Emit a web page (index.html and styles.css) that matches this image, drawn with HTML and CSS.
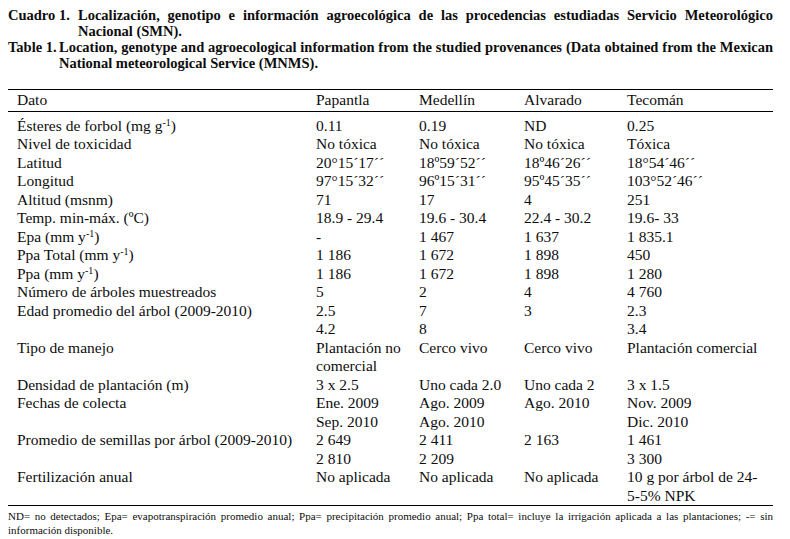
FILE: index.html
```html
<!DOCTYPE html>
<html>
<head>
<meta charset="utf-8">
<title>Cuadro 1</title>
<link rel="stylesheet" href="styles.css">
</head>
<body>
<div class="page">
  <div class="caption">
    <div class="cap-row">
      <span class="cap-label cap-label-es">Cuadro 1.</span>
      <span class="cap-text">Localización, genotipo e información agroecológica de las procedencias estudiadas Servicio Meteorológico Nacional (SMN).</span>
    </div>
    <div class="cap-row cap-row-en">
      <span class="cap-label cap-label-en">Table 1.</span>
      <span class="cap-text"><span class="tight">Location, genotype and agroecological information from the studied provenances (Data obtained from the Mexican</span> National meteorological Service (MNMS).</span>
    </div>
  </div>

  <table class="data">
    <colgroup>
      <col class="c1"><col class="c2"><col class="c3"><col class="c4"><col class="c5">
    </colgroup>
    <thead>
      <tr><th>Dato</th><th>Papantla</th><th>Medellín</th><th>Alvarado</th><th>Tecomán</th></tr>
    </thead>
    <tbody>
      <tr class="first"><td>Ésteres de forbol (mg g<sup>-1</sup>)</td><td>0.11</td><td>0.19</td><td>ND</td><td>0.25</td></tr>
      <tr><td>Nivel de toxicidad</td><td>No tóxica</td><td>No tóxica</td><td>No tóxica</td><td>Tóxica</td></tr>
      <tr><td>Latitud</td><td>20°15´17´´</td><td>18º59´52´´</td><td>18º46´26´´</td><td>18°54´46´´</td></tr>
      <tr><td>Longitud</td><td>97°15´32´´</td><td>96º15´31´´</td><td>95º45´35´´</td><td>103°52´46´´</td></tr>
      <tr><td>Altitud (msnm)</td><td>71</td><td>17</td><td>4</td><td>251</td></tr>
      <tr><td>Temp. min-máx. (ºC)</td><td>18.9 - 29.4</td><td>19.6 - 30.4</td><td>22.4 - 30.2</td><td>19.6- 33</td></tr>
      <tr class="sup-row"><td>Epa (mm y<sup>-1</sup>)</td><td>-</td><td>1 467</td><td>1 637</td><td>1 835.1</td></tr>
      <tr class="sup-row"><td>Ppa Total (mm y<sup>-1</sup>)</td><td>1 186</td><td>1 672</td><td>1 898</td><td>450</td></tr>
      <tr class="sup-row"><td>Ppa (mm y<sup>-1</sup>)</td><td>1 186</td><td>1 672</td><td>1 898</td><td>1 280</td></tr>
      <tr><td>Número de árboles muestreados</td><td>5</td><td>2</td><td>4</td><td>4 760</td></tr>
      <tr><td>Edad promedio del árbol (2009-2010)</td><td>2.5<br>4.2</td><td>7<br>8</td><td>3</td><td>2.3<br>3.4</td></tr>
      <tr><td>Tipo de manejo</td><td>Plantación no<br>comercial</td><td>Cerco vivo</td><td>Cerco vivo</td><td>Plantación comercial</td></tr>
      <tr><td>Densidad de plantación (m)</td><td>3 x 2.5</td><td>Uno cada 2.0</td><td>Uno cada 2</td><td>3 x 1.5</td></tr>
      <tr><td>Fechas de colecta</td><td>Ene. 2009<br>Sep. 2010</td><td>Ago. 2009<br>Ago. 2010</td><td>Ago. 2010</td><td>Nov. 2009<br>Dic. 2010</td></tr>
      <tr><td>Promedio de semillas por árbol (2009-2010)</td><td>2 649<br>2 810</td><td>2 411<br>2 209</td><td>2 163</td><td>1 461<br>3 300</td></tr>
      <tr class="last"><td>Fertilización anual</td><td>No aplicada</td><td>No aplicada</td><td>No aplicada</td><td>10 g por árbol de 24-<br>5-5% NPK</td></tr>
    </tbody>
  </table>

  <p class="note"><span class="note-l1">ND= no detectados; Epa= evapotranspiración promedio anual; Ppa= precipitación promedio anual; Ppa total= incluye la irrigación aplicada a las plantaciones; -= sin</span> <span class="note-l2">información disponible.</span></p>
</div>
</body>
</html>
```

FILE: styles.css
```css
html, body {
  margin: 0;
  padding: 0;
  background: #ffffff;
}

body {
  font-family: "Liberation Serif", serif;
  color: #0d0d0d;
}

.page {
  width: 765px;
  padding: 7px 0 0 8px;
}

.caption {
  font-weight: bold;
  font-size: 14.5px;
  line-height: 16px;
}

.cap-row {
  display: flex;
}

.cap-label {
  flex: none;
  white-space: nowrap;
}

.cap-label-es {
  width: 70px;
}

.cap-label-en {
  width: 51px;
}

.cap-text {
  flex: 1;
  min-width: 0;
  text-align: justify;
  text-align-last: left;
}

.tight {
  word-spacing: -2px;
}

.data {
  margin-top: 18px;
  width: 765px;
  table-layout: fixed;
  border-collapse: collapse;
  font-size: 15.5px;
  line-height: 18.5px;
}

.c1 { width: 308px; }
.c2 { width: 103px; }
.c3 { width: 105px; }
.c4 { width: 103px; }
.c5 { width: 146px; }

.data th,
.data td {
  padding: 0;
  text-align: left;
  vertical-align: top;
  white-space: nowrap;
  font-weight: normal;
}

.data th:first-child,
.data td:first-child {
  padding-left: 9px;
}

.data thead tr {
  border-top: 1px solid #000;
  border-bottom: 1px solid #000;
}

.data th {
  padding-top: 1px;
  padding-bottom: 1px;
}

.data tr.first td {
  padding-top: 5px;
}

.data tr.last {
  border-bottom: 1px solid #000;
}

.data sup {
  font-size: 10px;
  line-height: 0;
  vertical-align: 5px;
}

.note {
  margin: 3px 0 0 0;
  font-size: 11px;
  line-height: 14px;
}

.note-l1 {
  display: block;
  white-space: nowrap;
  text-align: justify;
  text-align-last: justify;
}

.note-l2 {
  display: block;
}
```
